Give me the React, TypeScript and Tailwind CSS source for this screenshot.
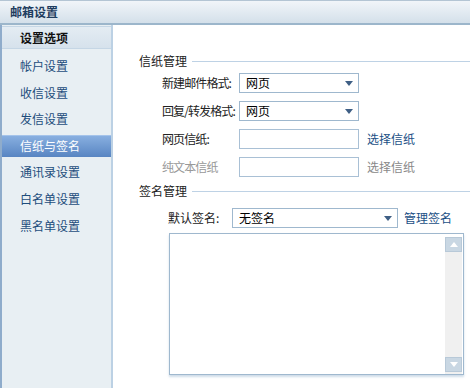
import React from "react";

const menu = ["帐户设置", "收信设置", "发信设置", "信纸与签名", "通讯录设置", "白名单设置", "黑名单设置"];

function Arrow() {
  return (
    <svg width="8" height="5" viewBox="0 0 8 5" className="shrink-0">
      <path d="M0 0 L8 0 L4 5 Z" fill="#3f5f85" />
    </svg>
  );
}

function SelectBox({ value, width }: { value: string; width: string }) {
  return (
    <div
      className={`flex h-[20px] ${width} shrink-0 items-center justify-between border border-[#9fb8ce] bg-white pl-[6px] pr-[5px] text-[12px] text-black`}
    >
      <span>{value}</span>
      <Arrow />
    </div>
  );
}

function Section({ title }: { title: string }) {
  return (
    <div className="flex items-center gap-[5px]">
      <span className="text-[12px] text-[#222]">{title}</span>
      <div className="h-px flex-1 bg-[#bed2e5]" />
    </div>
  );
}

function Row({ label, muted, children }: { label: string; muted?: boolean; children: React.ReactNode }) {
  return (
    <div className="flex h-[20px] items-center">
      <span
        className={`w-[100px] shrink-0 whitespace-nowrap pl-[23px] text-[12px] tracking-[-0.9px] ${muted ? "text-[#999]" : "text-[#222]"}`}
      >
        {label}
      </span>
      {children}
    </div>
  );
}

export default function App() {
  return (
    <div
      className="flex h-[388px] w-[470px] flex-col overflow-hidden bg-white"
      style={{ fontFamily: '"Noto Sans CJK SC", "Noto Sans", sans-serif' }}
    >
      <div className="flex h-[25px] shrink-0 items-center border-t border-b-2 border-t-[#b4c5d4] border-b-[#9cb6cb] bg-gradient-to-b from-[#f1f5f9] to-[#d4e0ea] pl-[10px]">
        <span className="text-[12px] font-bold text-[#1f3d60]">邮箱设置</span>
      </div>

      <div className="flex flex-1">
        <div className="flex w-[113px] shrink-0 flex-col border-l-2 border-r-2 border-l-[#8faccb] border-r-[#bcd1e4] bg-[#e8eff3]">
          <div className="mt-px flex h-[23px] items-center border-y border-[#c5d6e5] bg-gradient-to-b from-[#e4ecf3] to-[#d6e2ec] pl-[18px]">
            <span className="text-[12px] font-bold text-[#111]">设置选项</span>
          </div>
          <div className="mt-[6px] flex flex-col gap-[4.6px]">
            {menu.map((m) =>
              m === "信纸与签名" ? (
                <div
                  key={m}
                  className="flex h-[22px] items-center border-t border-[#a4c3ea] bg-gradient-to-b from-[#88afe0] to-[#5885c2] pl-[18px] text-[12px] text-white"
                >
                  {m}
                </div>
              ) : (
                <div key={m} className="flex h-[22px] items-center pl-[18px] text-[12px] text-[#1d4d7c]">
                  {m}
                </div>
              )
            )}
          </div>
        </div>

        <div className="flex flex-1 flex-col pl-[26px] pt-[27px]">
          <Section title="信纸管理" />
          <div className="mt-[3px] flex flex-col gap-[8px] pr-[10px]">
            <Row label="新建邮件格式:">
              <SelectBox value="网页" width="w-[120px]" />
            </Row>
            <Row label="回复/转发格式:">
              <SelectBox value="网页" width="w-[120px]" />
            </Row>
            <Row label="网页信纸:">
              <div className="h-[20px] w-[120px] shrink-0 border border-[#a9c0d5] bg-white" />
              <span className="ml-[8px] whitespace-nowrap text-[12px] text-[#1a4f85]">选择信纸</span>
            </Row>
            <Row label="纯文本信纸" muted>
              <div className="h-[20px] w-[120px] shrink-0 border border-[#a9c0d5] bg-white" />
              <span className="ml-[8px] whitespace-nowrap text-[12px] text-[#888]">选择信纸</span>
            </Row>
          </div>

          <div className="mt-[5px]">
            <Section title="签名管理" />
          </div>

          <div className="mt-[8px] flex h-[20px] items-center">
            <span className="w-[93px] shrink-0 whitespace-nowrap pl-[29px] text-[12px] text-[#222]">默认签名:</span>
            <SelectBox value="无签名" width="w-[166px]" />
            <span className="ml-[6px] whitespace-nowrap text-[12px] text-[#1a4f85]">管理签名</span>
          </div>

          <div className="ml-[30px] mt-[5px] flex h-[142px] w-[295px] border border-[#9fb8ce] bg-white shadow-[0_2px_2px_rgba(160,185,210,0.5)]">
            <div className="flex-1" />
            <div className="mr-px mt-[3px] flex w-[17px] flex-col justify-between bg-[#f0f0f0]">
              <div className="flex h-[15px] items-center justify-center border border-[#b8c9d8] bg-[#c9d7e3]">
                <svg width="8" height="5" viewBox="0 0 8 5">
                  <path d="M0 5 L8 5 L4 0 Z" fill="#fff" />
                </svg>
              </div>
              <div className="mb-[2px] flex h-[15px] items-center justify-center border border-[#b8c9d8] bg-[#c9d7e3]">
                <svg width="8" height="5" viewBox="0 0 8 5">
                  <path d="M0 0 L8 0 L4 5 Z" fill="#fff" />
                </svg>
              </div>
            </div>
          </div>
        </div>
      </div>
    </div>
  );
}
